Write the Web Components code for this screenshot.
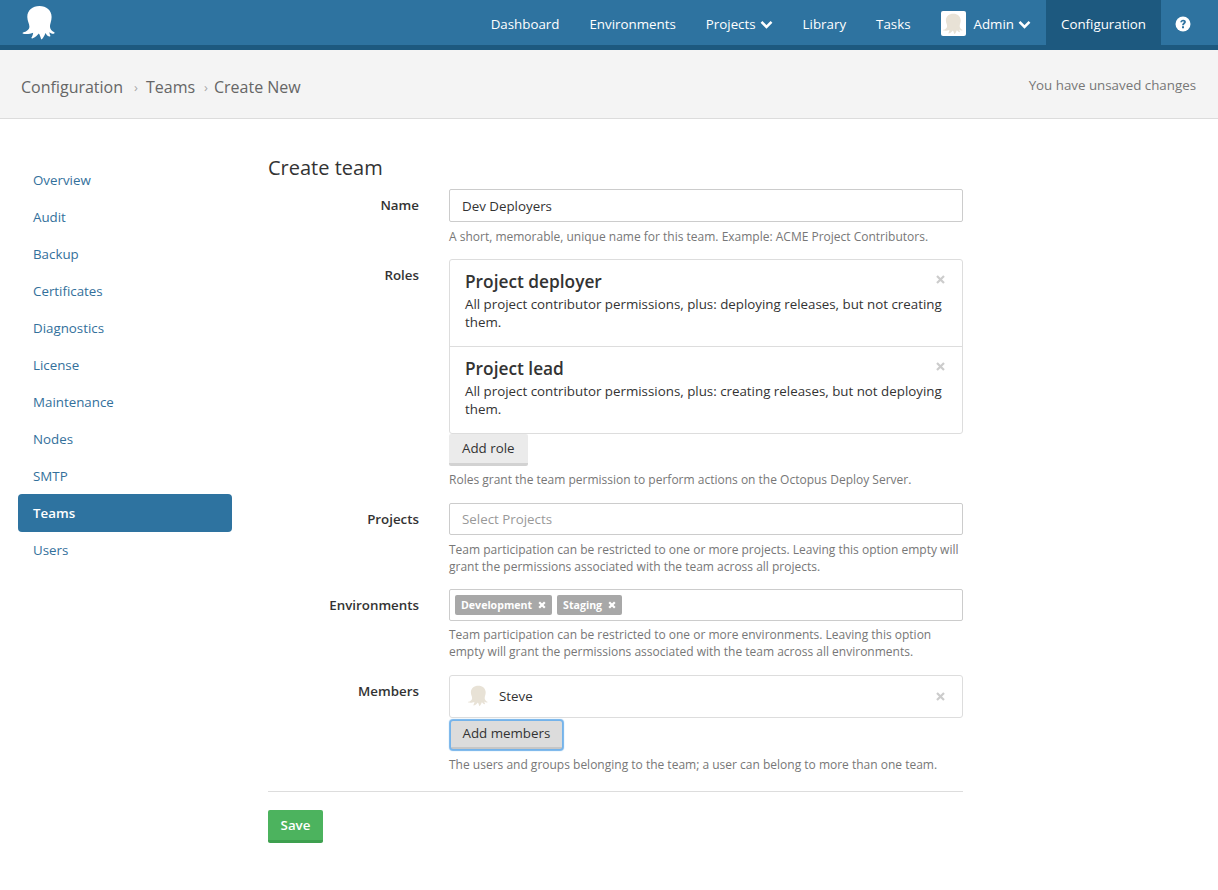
<!DOCTYPE html>
<html>
<head>
<meta charset="utf-8">
<title>Create team</title>
<style>
    html, body { margin: 0; padding: 0; background: #fff; }
    body { font-family: "Open Sans", "Liberation Sans", sans-serif; font-size: 14px; color: #333; }
</style>
</head>
<body>
<app-topbar></app-topbar>
<app-breadcrumb></app-breadcrumb>
<config-page>
    <side-nav slot="nav"></side-nav>
    <team-form></team-form>
</config-page>

<script>
const OCTO = 'M12.3.7C16.9.7 20.4 3.6 20.4 8 20.4 10.500 19.300 12.500 19.300 14.400 19.300 16 20.600 17.600 22.200 18.200 22.700 18.500 22.300 19.100 21.800 19.100 20.600 19.200 19.600 18.700 18.900 18.100 19 19 19.300 19.900 19.600 20.500 19.700 20.900 19.300 21.100 18.900 21 17.600 20.600 16.800 19.600 16.300 18.600 15.800 20 15 21.700 14.100 22.700 13.800 23 13.400 22.900 13.300 22.500 13 21.200 12.500 19.900 11.900 19 11 20 9.500 21.700 7.500 22.300 7 22.400 6.800 22 7 21.700 7.600 20.700 8 19.500 8.100 18.500 6.500 19.200 3.800 19.600 1.500 19.200 .9 19.100 .9 18.600 1.400 18.400 3.600 17.800 5.600 16.500 5.600 14.400 5.600 12.500 4.200 10.700 4.200 8 4.200 3.600 7.700 .7 12.300 .7z';

class AppTopbar extends HTMLElement {
    constructor() {
        super();
        this.attachShadow({ mode: 'open' });
    }

    connectedCallback() {
        this.shadowRoot.innerHTML = `
            <style>
                :host {
                    display: flex;
                    height: 45px;
                    background: #2e73a0;
                    border-bottom: 5px solid #1d597f;
                    color: #fff;
                    font-size: 13.33px;
                }
                .logo { margin: 5px 0 0 21px; width: 36px; height: 36px; }
                .logo svg { width: 36px; height: 36px; fill: #fff; display: block; }
                nav { margin-left: auto; display: flex; height: 45px; }
                a { display: flex; align-items: center; padding: 2px 15px 0; box-sizing: border-box; color: #fff; text-decoration: none; }
                a.active { background: #1d597f; }
                .chev { width: 13px; height: 9px; margin: 2px 0 0 4px; }
                .avatar {
                    width: 25px; height: 25px; background: #fff; border-radius: 2px;
                    margin: 0 8px 0 0; display: flex; align-items: center; justify-content: center;
                }
                .avatar svg { width: 22px; height: 22px; fill: #e8e2d6; }
                .help { padding: 2px 27px 0 14px; justify-content: center; }
                .help svg { width: 16px; height: 16px; }
            </style>
            <div class="logo"><svg viewBox="0 0 24 24"><path d="${OCTO}"/></svg></div>
            <nav>
                <a>Dashboard</a>
                <a>Environments</a>
                <a>Projects<svg class="chev" viewBox="0 0 13 9"><path d="M1.500 1.800 6.500 6.800 11.500 1.800" fill="none" stroke="#fff" stroke-width="2.600"/></svg></a>
                <a>Library</a>
                <a>Tasks</a>
                <a><span class="avatar"><svg viewBox="0 0 24 24"><path d="${OCTO}"/></svg></span>Admin<svg class="chev" viewBox="0 0 13 9"><path d="M1.500 1.800 6.500 6.800 11.500 1.800" fill="none" stroke="#fff" stroke-width="2.600"/></svg></a>
                <a class="active">Configuration</a>
                <a class="help"><svg viewBox="0 0 16 16"><circle cx="8" cy="8" r="7.500" fill="#fff"/><path d="M5.300 6.200C5.400 4.600 6.600 3.700 8.100 3.700 9.700 3.700 10.900 4.600 10.900 6 10.900 7.700 8.900 7.800 8.900 9.300H7.100C7.100 7.200 8.900 7 8.900 6.100 8.900 5.600 8.500 5.300 8 5.300 7.500 5.300 7.100 5.700 7 6.300ZM7 10.200H9V12.200H7Z" fill="#2e73a0"/></svg></a>
            </nav>
        `;
    }
}

class AppBreadcrumb extends HTMLElement {
    constructor() {
        super();
        this.attachShadow({ mode: 'open' });
    }

    connectedCallback() {
        this.shadowRoot.innerHTML = `
            <style>
                :host {
                    display: flex;
                    align-items: center;
                    justify-content: space-between;
                    height: 68px;
                    padding: 0 22px 0 21px;
                    background: #f4f4f4;
                    border-bottom: 1px solid #dcdcdc;
                    color: #666;
                }
                .path { font-size: 16px; display: flex; align-items: center; margin-top: 6px; }
                .sep { font-size: 13px; color: #aaa; margin: 0 8px 0 11px; }
                .sep.b { margin: 0 6px 0 9px; }
                .status { font-size: 13.33px; color: #777; margin-top: 1px; }
            </style>
            <div class="path"><span>Configuration</span><span class="sep">›</span><span>Teams</span><span class="sep b">›</span><span>Create New</span></div>
            <div class="status">You have unsaved changes</div>
        `;
    }
}

class ConfigPage extends HTMLElement {
    constructor() {
        super();
        this.attachShadow({ mode: 'open' });
    }

    connectedCallback() {
        this.shadowRoot.innerHTML = `
            <style>
                :host { display: flex; padding: 35px 0 0 18px; gap: 36px; }
            </style>
            <slot name="nav"></slot>
            <slot></slot>
        `;
    }
}

class SideNav extends HTMLElement {
    constructor() {
        super();
        this.attachShadow({ mode: 'open' });
    }

    connectedCallback() {
        const items = ['Overview', 'Audit', 'Backup', 'Certificates', 'Diagnostics', 'License', 'Maintenance', 'Nodes', 'SMTP', 'Teams', 'Users'];
        this.shadowRoot.innerHTML = `
            <style>
                :host { display: block; width: 214px; padding-top: 8px; font-size: 13.33px; }
                a {
                    display: block;
                    height: 37px;
                    line-height: 37px;
                    padding-left: 15px;
                    color: #33709b;
                    border-radius: 4px;
                }
                a.active { background: #2e73a0; color: #fff; font-weight: 600; height: 38px; line-height: 38px; margin-top: -1px; }
            </style>
            ${items.map(i => `<a class="${i === 'Teams' ? 'active' : ''}">${i}</a>`).join('')}
        `;
    }
}

class FormRow extends HTMLElement {
    constructor() {
        super();
        this.attachShadow({ mode: 'open' });
    }

    connectedCallback() {
        this.shadowRoot.innerHTML = `
            <style>
                :host { display: grid; grid-template-columns: 151px 514px; column-gap: 30px; }
                label {
                    text-align: right;
                    font-size: 13.33px;
                    font-weight: 600;
                    color: #333;
                    line-height: 18px;
                    padding-top: 7px;
                }
                .hint { font-size: 12px; line-height: 17px; color: #777; margin-top: var(--hint-top, 6px); }
            </style>
            <label>${this.getAttribute('label')}</label>
            <div>
                <slot></slot>
                <div class="hint"><slot name="hint"></slot></div>
            </div>
        `;
    }
}

class TextBox extends HTMLElement {
    constructor() {
        super();
        this.attachShadow({ mode: 'open' });
    }

    connectedCallback() {
        this.shadowRoot.innerHTML = `
            <style>
                :host {
                    display: flex;
                    align-items: center;
                    box-sizing: border-box;
                    height: var(--box-height, 33px);
                    padding: 0 12px;
                    gap: 5px;
                    border: 1px solid #ccc;
                    border-radius: 2px;
                    background: #fff;
                    font-size: 13.33px;
                    color: #333;
                }
                :host([placeholder]) { color: #999; }
                :host([tags]) { padding: 0 5px; }
            </style>
            <slot></slot>
        `;
    }
}

class TagChip extends HTMLElement {
    constructor() {
        super();
        this.attachShadow({ mode: 'open' });
    }

    connectedCallback() {
        this.shadowRoot.innerHTML = `
            <style>
                :host {
                    display: inline-flex;
                    align-items: center;
                    box-sizing: border-box;
                    height: 20px;
                    padding: 0 6px 1px;
                    gap: 6px;
                    background: #a8a8a8;
                    border-radius: 2px;
                    color: #fff;
                    font-size: 10.6px;
                    font-weight: 700;
                }
                svg { width: 8px; height: 8px; margin-top: 1px; }
            </style>
            <slot></slot>
            <svg viewBox="0 0 8 8"><path d="M1.200 1.200 6.800 6.800M6.800 1.200 1.200 6.800" stroke="#fff" stroke-width="2.200"/></svg>
        `;
    }
}

class CardList extends HTMLElement {
    constructor() {
        super();
        this.attachShadow({ mode: 'open' });
    }

    connectedCallback() {
        this.shadowRoot.innerHTML = `
            <style>
                :host { display: block; border: 1px solid #ddd; border-radius: 3px; background: #fff; }
                ::slotted(:not(:first-child)) { border-top: 1px solid #ddd; }
            </style>
            <slot></slot>
        `;
    }
}

class RoleCard extends HTMLElement {
    constructor() {
        super();
        this.attachShadow({ mode: 'open' });
    }

    connectedCallback() {
        this.shadowRoot.innerHTML = `
            <style>
                :host { display: block; position: relative; box-sizing: border-box; height: 87px; padding: 8px 15px 0; }
                :host(:first-child) { height: 86px; }
                h3 { margin: 0; font-size: 17.3px; font-weight: 600; line-height: 27px; color: #333; }
                p { margin: 0; font-size: 13.33px; line-height: 18px; color: #333; }
                svg { position: absolute; right: 17px; top: 15px; width: 9px; height: 9px; }
            </style>
            <h3>${this.getAttribute('name')}</h3>
            <p><slot></slot></p>
            <svg viewBox="0 0 9 9"><path d="M1 1 8 8M8 1 1 8" stroke="#ccc" stroke-width="2.200"/></svg>
        `;
    }
}

class MemberCard extends HTMLElement {
    constructor() {
        super();
        this.attachShadow({ mode: 'open' });
    }

    connectedCallback() {
        this.shadowRoot.innerHTML = `
            <style>
                :host { display: flex; align-items: center; position: relative; height: 39px; padding-bottom: 2px; font-size: 13.33px; color: #333; }
                .octo { width: 22px; height: 22px; margin: 0 10px 0 17px; fill: #e8e2d6; }
                .x { position: absolute; right: 17px; top: 16px; width: 9px; height: 9px; }
            </style>
            <svg class="octo" viewBox="0 0 24 24"><path d="${OCTO}"/></svg>
            <slot></slot>
            <svg class="x" viewBox="0 0 9 9"><path d="M1 1 8 8M8 1 1 8" stroke="#ccc" stroke-width="2.200"/></svg>
        `;
    }
}

class FlatButton extends HTMLElement {
    constructor() {
        super();
        this.attachShadow({ mode: 'open' });
    }

    connectedCallback() {
        this.shadowRoot.innerHTML = `
            <style>
                :host {
                    display: inline-flex;
                    align-items: center;
                    box-sizing: border-box;
                    height: 32px;
                    padding: 0 13px 1px;
                    background: #ebebeb;
                    border-bottom: 3px solid #d2d2d2;
                    border-radius: 2px;
                    font-size: 13.33px;
                    color: #333;
                }
                :host([focused]) {
                    background: #dcdcdc;
                    box-shadow: 0 0 1px 2px #74b3ea;
                    border-bottom: 2px solid #c6c6c6;
                    height: 28px;
                    margin: 3px 0 1px 2px;
                    padding: 0 11.500px 2px;
                }
                :host([primary]) {
                    height: 33px;
                    width: 55px;
                    justify-content: center;
                    background: #4cb35e;
                    border-bottom-color: #3ea04f;
                    color: #fff;
                    font-weight: 600;
                    padding: 0;
                }
            </style>
            <slot></slot>
        `;
    }
}

class TeamForm extends HTMLElement {
    constructor() {
        super();
        this.attachShadow({ mode: 'open' });
    }

    connectedCallback() {
        this.shadowRoot.innerHTML = `
            <style>
                :host { display: block; width: 695px; }
                h2 { margin: 0 0 8px; font-size: 20px; font-weight: 400; line-height: 27px; color: #333; }
                form-row { margin-bottom: 14px; }
                .tight { --hint-top: 5px; margin-bottom: 15px; }
                .narrow { --box-height: 32px; }
                .actions { border-top: 1px solid #ddd; margin-top: 18px; padding-top: 18px; }
                .btn-line { display: flex; }
            </style>
            <h2>Create team</h2>
            <form-row label="Name">
                <text-box>Dev Deployers</text-box>
                <span slot="hint">A short, memorable, unique name for this team. Example: ACME Project Contributors.</span>
            </form-row>
            <form-row label="Roles" class="tight">
                <card-list>
                    <role-card name="Project deployer">All project contributor permissions, plus: deploying releases, but not creating them.</role-card>
                    <role-card name="Project lead">All project contributor permissions, plus: creating releases, but not deploying them.</role-card>
                </card-list>
                <div class="btn-line"><flat-button>Add role</flat-button></div>
                <span slot="hint">Roles grant the team permission to perform actions on the Octopus Deploy Server.</span>
            </form-row>
            <form-row label="Projects" class="narrow">
                <text-box placeholder>Select Projects</text-box>
                <span slot="hint">Team participation can be restricted to one or more projects. Leaving this option empty will grant the permissions associated with the team across all projects.</span>
            </form-row>
            <form-row label="Environments" class="narrow tight">
                <text-box tags><tag-chip>Development</tag-chip><tag-chip>Staging</tag-chip></text-box>
                <span slot="hint">Team participation can be restricted to one or more environments. Leaving this option empty will grant the permissions associated with the team across all environments.</span>
            </form-row>
            <form-row label="Members">
                <card-list><member-card>Steve</member-card></card-list>
                <div class="btn-line"><flat-button focused>Add members</flat-button></div>
                <span slot="hint">The users and groups belonging to the team; a user can belong to more than one team.</span>
            </form-row>
            <div class="actions"><flat-button primary>Save</flat-button></div>
        `;
    }
}

customElements.define('app-topbar', AppTopbar);
customElements.define('app-breadcrumb', AppBreadcrumb);
customElements.define('config-page', ConfigPage);
customElements.define('side-nav', SideNav);
customElements.define('form-row', FormRow);
customElements.define('text-box', TextBox);
customElements.define('tag-chip', TagChip);
customElements.define('card-list', CardList);
customElements.define('role-card', RoleCard);
customElements.define('member-card', MemberCard);
customElements.define('flat-button', FlatButton);
customElements.define('team-form', TeamForm);
</script>
</body>
</html>
